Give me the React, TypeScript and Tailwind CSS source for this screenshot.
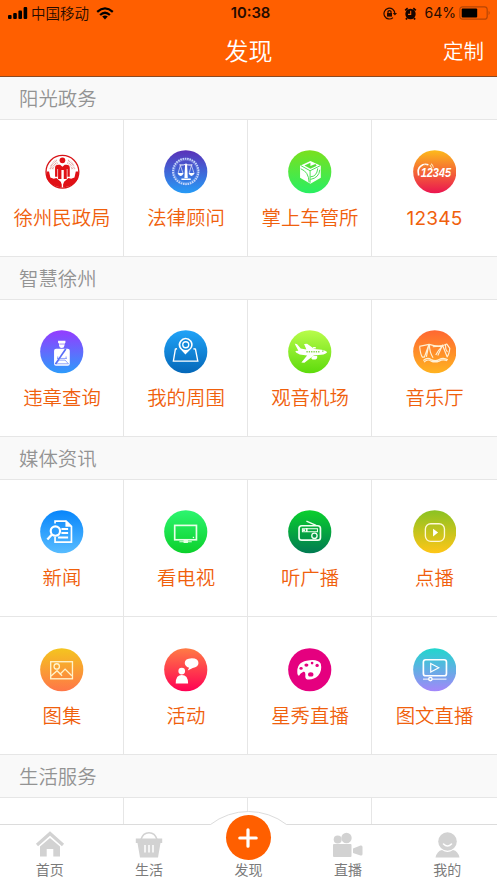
import type { ReactNode } from "react";
import { clsx } from "clsx";

interface Service {
  label: string;
  colors?: [string, string];
  glyph: ReactNode;
}

interface Section {
  title: string;
  rows: Service[][];
}

const sections: Section[] = [
  {
    title: "阳光政务",
    rows: [
      [
        {
          label: "徐州民政局",
          glyph: (
            <>
              <circle cx="67" cy="65" r="49" fill="#fff" stroke="#d81418" strokeWidth="4" />
              <g fill="#e01016">
                <circle cx="67" cy="31" r="8.5" />
                <path d="M45 53Q45 44 55 44H60L67 50L74 44H79Q89 44 89 53V80H82V57H80V87H71V60H64V87H54V57H52V80H45Z" />
                <path d="M20 64L27 64L31 82L41 86L49 84L62 95L65 103V112Q32 108 20 85Z" />
                <path d="M114 64L107 64L103 82L93 86L85 84L72 95L69 103V112Q102 108 114 85Z" />
              </g>
              <g fill="none" stroke="#d88a8a" strokeWidth="5" strokeDasharray="2 2.5">
                <path d="M31 57Q35 38 50 31M84 31Q99 38 103 57" />
                <path d="M38 57Q40 44 52 38M82 38Q94 44 96 57" />
              </g>
            </>
          ),
        },
        {
          label: "法律顾问",
          colors: ["#5a31b8", "#269bf6"],
          glyph: (
            <>
              <circle cx="65" cy="64" r="38" fill="none" stroke="#c3d4fa" strokeWidth="6" strokeDasharray="5 2" />
              <circle cx="65" cy="64" r="34" fill="none" stroke="#b7cdfa" strokeWidth="1" />
              <g fill="none" stroke="#fff" strokeWidth="3">
                <path d="M46 44Q57 47 65 42Q73 47 85 44M66 40V84" />
                <path d="M49 46L42 70M49 46L57 70M82 46L75 70M82 46L90 70" strokeWidth="1.8" />
              </g>
              <path d="M63 43H69L71 84H61ZM52 85H80V90H52ZM41 69H58Q56 78 49 78Q43 78 41 69ZM74 69H91Q88 78 82 78Q76 78 74 69Z" fill="#fff" />
            </>
          ),
        },
        {
          label: "掌上车管所",
          colors: ["#7ae01e", "#29ef63"],
          glyph: (
            <>
              <path d="M67 33L98 47V83L67 101L36 83V47Z" fill="#fff" />
              <g fill="none" stroke="#40de49" strokeWidth="2.8">
                <path d="M39 47L66 62L96 47M66 62V98" />
                <path d="M38 56Q62 65 63 96M67 80Q86 80 89 55M67 88Q93 83 95 59" />
              </g>
              <path d="M49 46L67 38V48L82 42L86 47L67 56Z" fill="#55e13a" />
            </>
          ),
        },
        {
          label: "12345",
          colors: ["#fdbb1b", "#eb1550"],
          glyph: (
            <>
              <path d="M17 76Q12 56 23 48Q32 40 46 44" fill="none" stroke="#fff" strokeWidth="5" />
              <path d="M22 55L35 43M27 54L40 43" stroke="#ef8a36" strokeWidth="1.5" />
              <path d="M51 45Q53 49 56 54M54 41Q61 46 61 53" fill="none" stroke="#ffe6b6" strokeWidth="3" />
              <text
                x="23"
                y="82"
                fill="#fff"
                fontFamily="Liberation Sans, sans-serif"
                fontSize="37"
                fontWeight="700"
                fontStyle="italic"
                textLength="91"
                lengthAdjust="spacingAndGlyphs"
              >
                12345
              </text>
              <path d="M91 75L112 70" stroke="#ef5d3c" strokeWidth="2" />
            </>
          ),
        },
      ],
    ],
  },
  {
    title: "智慧徐州",
    rows: [
      [
        {
          label: "违章查询",
          colors: ["#953bff", "#2d9bfb"],
          glyph: (
            <>
              <path d="M54 32H76V38L73 41V47Q72 54 65 54Q58 54 57 47V41L54 38Z" fill="#fff" />
              <rect x="42" y="56" width="47" height="51" rx="6" fill="#fff" />
              <path d="M58 42H72" stroke="#7d58ee" strokeWidth="2" />
              <path d="M77 57L46 102" stroke="#576cf8" strokeWidth="5" />
              <path d="M51 85H80M53 79V86M78 79V86M48 101L57 90H75L85 101Z" fill="none" stroke="#5d78f9" strokeWidth="2" />
            </>
          ),
        },
        {
          label: "我的周围",
          colors: ["#20a3f8", "#0467b8"],
          glyph: (
            <>
              <path d="M39 56L34 57L28 93H101L94 57L88 56" fill="none" stroke="#fff" strokeWidth="4" />
              <path d="M64 73L48 56Q39 43 48 32Q55 23 64 23Q75 23 82 32Q90 44 81 56Z" fill="#fff" />
              <circle cx="65" cy="44" r="16" fill="#1089db" />
              <circle cx="65" cy="44" r="9" fill="none" stroke="#fff" strokeWidth="4" />
            </>
          ),
        },
        {
          label: "观音机场",
          colors: ["#b9fc4b", "#5ddb0b"],
          glyph: (
            <>
              <path
                d="M20 41Q25 40 28 43L38 55L55 58L48 42L57 41L79 57L101 59Q113 61 117 66Q114 73 99 74L77 76L49 98L40 97L57 76L35 73L24 67L22 63L31 62Z"
                fill="#fff"
              />
              <path d="M74 78H87Q89 86 82 88H73L69 84ZM75 51H83V55H75Z" fill="#fff" />
              <path d="M55 65H94M102 63H109" stroke="#86d34c" strokeWidth="4" strokeDasharray="4 3" />
            </>
          ),
        },
        {
          label: "音乐厅",
          colors: ["#ff6732", "#ffb320"],
          glyph: (
            <g fill="none" stroke="#fff0d4" strokeWidth="3.5" strokeLinejoin="round">
              <path d="M19 49L48 43Q81 53 101 42L110 55Q108 73 102 80L88 45Q80 65 74 76" />
              <path d="M20 50Q22 73 28 81H34L47 45L40 80M49 44Q49 66 60 83M59 50Q70 49 88 48Q76 59 68 75M97 45Q96 58 103 66" />
              <path d="M31 91Q43 80 54 88Q67 95 78 88Q91 81 104 89M33 96Q44 85 54 93Q66 98 78 93Q90 86 102 92" />
            </g>
          ),
        },
      ],
    ],
  },
  {
    title: "媒体资讯",
    rows: [
      [
        {
          label: "新闻",
          colors: ["#0785fb", "#58bcff"],
          glyph: (
            <g fill="none" stroke="#fff">
              <path d="M45 40V33H78L94 49V96H45V80" strokeWidth="5" />
              <path d="M76 31V50H95Z" fill="#fff" stroke="none" />
              <path d="M64 57H84M64 69H84M54 82H84" strokeWidth="6" />
              <circle cx="46" cy="63" r="14" fill="#2b9cfc" strokeWidth="6.5" />
              <path d="M35 74L22 88" strokeWidth="7" />
            </g>
          ),
        },
        {
          label: "看电视",
          colors: ["#2df56f", "#0bd02b"],
          glyph: (
            <>
              <rect x="32" y="46" width="65" height="43" fill="none" stroke="#e7ffe7" strokeWidth="5" />
              <path d="M46 95H83M60 91H70V97H60Z" fill="#e7ffe7" stroke="#e7ffe7" strokeWidth="3" />
              <path d="M86 80H90V84H86Z" fill="#e7ffe7" />
            </>
          ),
        },
        {
          label: "听广播",
          colors: ["#0ad02d", "#017b52"],
          glyph: (
            <g fill="none" stroke="#f1fff1">
              <rect x="33" y="47" width="64" height="43" rx="8" strokeWidth="5" />
              <path d="M55 33L84 46" strokeWidth="4" />
              <rect x="43" y="56" width="45" height="9" strokeWidth="3" />
              <path d="M44 60H51M56 54V66" strokeWidth="5" />
              <circle cx="79" cy="77" r="8" fill="#079747" strokeWidth="4" />
            </g>
          ),
        },
        {
          label: "点播",
          colors: ["#8ac222", "#ffc617"],
          glyph: (
            <>
              <rect x="37" y="41" width="57" height="53" rx="16" fill="none" stroke="#fff8d5" strokeWidth="4" />
              <path d="M60 56L75 67L60 79Z" fill="#fff" />
            </>
          ),
        },
      ],
      [
        {
          label: "图集",
          colors: ["#f4c51f", "#ff7648"],
          glyph: (
            <g fill="none" stroke="#fff3cb" strokeWidth="4">
              <rect x="32" y="41" width="65" height="51" />
              <circle cx="50" cy="55" r="8" />
              <path d="M33 84L51 68L66 83M59 79L75 63L95 83" />
            </g>
          ),
        },
        {
          label: "活动",
          colors: ["#ff7c45", "#ff0054"],
          glyph: (
            <g fill="#fff">
              <circle cx="53" cy="69" r="10" />
              <path d="M35 106Q35 81 53 81Q72 81 72 106Z" />
              <path d="M83 31Q103 31 103 45Q103 57 86 60L71 67L75 59Q62 55 62 45Q62 32 83 31Z" />
            </g>
          ),
        },
        {
          label: "星秀直播",
          colors: ["#e5007f", "#e5007f"],
          glyph: (
            <>
              <path
                d="M28 76Q25 43 56 38Q88 31 98 47Q103 68 90 83Q76 96 58 94Q50 92 52 79Q52 69 46 71Q36 75 33 83Q29 83 28 76Z"
                fill="#fff"
              />
              <g fill="#e5007f">
                <ellipse cx="39" cy="61" rx="5" ry="4" />
                <ellipse cx="55" cy="51" rx="6" ry="5" />
                <circle cx="72" cy="45" r="4" />
                <circle cx="87" cy="52" r="5" />
                <ellipse cx="68" cy="79" rx="8" ry="6.5" />
              </g>
            </>
          ),
        },
        {
          label: "图文直播",
          colors: ["#20d7cd", "#a486fa"],
          glyph: (
            <g fill="none" stroke="#fff">
              <rect x="31" y="35" width="69" height="48" rx="7" strokeWidth="5" />
              <path d="M53 46L77 59L53 72Z" strokeWidth="3.5" />
              <path d="M30 93H100" strokeWidth="3" />
              <circle cx="52" cy="93" r="5" fill="#87b2eb" strokeWidth="4" />
            </g>
          ),
        },
      ],
    ],
  },
];

const tabs: { label: string; icon: ReactNode }[] = [
  {
    label: "首页",
    icon: (
      <>
        <path d="M1 14L14 2.5L27 14" fill="none" stroke="#d2d2d2" strokeWidth="3.2" />
        <path d="M4 15.6L14 7L24 15.6V25.5H17.3V18H10.7V25.5H4Z" fill="#d2d2d2" />
      </>
    ),
  },
  {
    label: "生活",
    icon: (
      <>
        <path d="M6 8.5Q8 1.7 14 1.7Q20 1.7 22 8.5" fill="none" stroke="#d2d2d2" strokeWidth="1.6" />
        <path d="M.8 7.5H27.2V12H25.5L23 26.5H5L2.5 12H.8Z" fill="#d2d2d2" />
        <path d="M10 14V21.5M14 14V21.5M18 14V21.5" stroke="#fff" strokeWidth="1.5" />
      </>
    ),
  },
  { label: "发现", icon: null },
  {
    label: "直播",
    icon: (
      <g fill="#d2d2d2">
        <circle cx="3.7" cy="8.5" r="4" />
        <circle cx="12.5" cy="7" r="5.2" />
        <rect x="-1" y="13" width="18.5" height="13" rx="1" />
        <path d="M19 17.5L26.5 14.5Q28.5 14 28.5 16V23Q28.5 25 26.5 24.5L19 22Z" />
      </g>
    ),
  },
  {
    label: "我的",
    icon: (
      <>
        <circle cx="14.5" cy="10.5" r="9.3" fill="#d2d2d2" />
        <path d="M10.5 13Q14.5 17 18.5 13" fill="none" stroke="#fff" strokeWidth="1.6" strokeLinecap="round" />
        <path d="M2.5 26.5Q4 20 9 19Q14.5 23 20 19Q25 20 26.5 26.5Z" fill="#d2d2d2" />
      </>
    ),
  },
];

function StatusBar() {
  return (
    <div className="grid h-[26px] grid-cols-3 items-center pr-[6px] pl-2 text-[#250b00]">
      <div className="flex items-center">
        <svg width="20" height="12" viewBox="0 0 20 12" fill="#000">
          <rect x="0" y="8" width="3.6" height="4" rx="1" />
          <rect x="5.2" y="6" width="3.6" height="6" rx="1" />
          <rect x="10.4" y="3.5" width="3.6" height="8.5" rx="1" />
          <rect x="15.6" y="0" width="3.6" height="12" rx="1" />
        </svg>
        <span className="ml-[3px] text-[14.5px] leading-none font-[350] whitespace-nowrap">中国移动</span>
        <svg className="ml-[7px]" width="18" height="13" viewBox="0 0 18 13" fill="none" stroke="#000" strokeWidth="2.3">
          <path d="M1.2 4.8Q9 -2 16.8 4.8M4.1 8Q9 3.6 13.9 8" />
          <path d="M9 12.4L6.2 9.6Q9 7.4 11.8 9.6Z" fill="#000" stroke="none" />
        </svg>
      </div>
      <div className="pl-[2px] text-center font-[Inter,sans-serif] text-[14.8px] leading-none font-semibold">10:38</div>
      <div className="flex items-center justify-end">
        <svg width="14" height="13" viewBox="0 0 14 13" fill="none" stroke="#250b00" strokeWidth="1.2">
          <path d="M11.8 6.5A5.4 5.4 0 1 0 10 10.6" />
          <path d="M9.8 6H14L11.9 8.6Z" fill="#250b00" stroke="none" />
          <rect x="4" y="6" width="5" height="3.6" fill="#250b00" stroke="none" />
          <path d="M5 6V4.5Q6.5 2.7 8 4.5V6" />
        </svg>
        <svg className="ml-[7px]" width="13" height="13" viewBox="0 0 13 13">
          <circle cx="6.5" cy="7" r="5.2" fill="#170500" />
          <path d="M1.2 3.4L3.7 1.2M11.8 3.4L9.3 1.2M3 11L2 12.5M10 11L11 12.5" stroke="#170500" strokeWidth="1.8" />
          <path d="M6.7 3.8V7.4H4" fill="none" stroke="#ff6200" strokeWidth="1.1" />
        </svg>
        <span className="ml-2 font-[Inter,sans-serif] text-[14px] leading-none">64%</span>
        <svg className="ml-[3px]" width="32" height="14" viewBox="0 0 32 14">
          <rect x=".8" y=".8" width="27.4" height="12.4" rx="2.8" fill="none" stroke="#b84604" strokeWidth="1.2" />
          <rect x="2.7" y="2.6" width="15.5" height="8.8" rx="1" fill="#000" />
          <path d="M29.6 4.8Q31.8 7 29.6 9.2Z" fill="#b84604" />
        </svg>
      </div>
    </div>
  );
}

function SectionTitle({ children }: { children: ReactNode }) {
  return (
    <h2 className="h-[43px] shrink-0 border-b border-[#e6e6e6] bg-[#f9f9f9] pl-[19px] text-[19.4px] leading-[42px] font-[350] text-[#939393]">
      {children}
    </h2>
  );
}

function ServiceCell({ service, id, tall }: { service: Service; id: string; tall: boolean }) {
  return (
    <div
      className={clsx(
        "flex flex-col items-center border-r border-b border-[#e6e6e6] pl-px last:border-r-0 last:pl-0",
        tall ? "h-[138px] pt-[31px]" : "h-[137px] pt-[30px]"
      )}
    >
      <svg width="43.5" height="43.5" viewBox="0 0 130 130" className="shrink-0">
        {service.colors && (
          <>
            <defs>
              <linearGradient id={id} x1="0" y1="0" x2="0" y2="1">
                <stop offset="0" stopColor={service.colors[0]} />
                <stop offset="1" stopColor={service.colors[1]} />
              </linearGradient>
            </defs>
            <circle cx="65" cy="65" r="64.5" fill={`url(#${id})`} />
          </>
        )}
        {service.glyph}
      </svg>
      <span
        className={clsx(
          "leading-[28px] whitespace-nowrap text-[#f0600c]",
          service.label === "12345"
            ? "mt-[11px] font-[Inter,sans-serif] text-[19px] tracking-[0.2px]"
            : "mt-[9px] text-[19.4px] font-[350]"
        )}
      >
        {service.label}
      </span>
    </div>
  );
}

function TabBar() {
  return (
    <nav className="relative grid h-[59px] shrink-0 grid-cols-5 border-t border-[#dcdcdc] bg-white">
      {/* raised arc behind the centre button */}
      <svg className="absolute -top-[14px] left-[210px]" width="77" height="15" viewBox="0 0 77 15">
        <path d="M.5 13.5A62 62 0 0 1 76.5 13.5V15H.5Z" fill="#fff" />
        <path d="M.5 13.5A62 62 0 0 1 76.5 13.5" fill="none" stroke="#dcdcdc" />
      </svg>
      {tabs.map((tab) => (
        <div key={tab.label} className="relative flex flex-col items-center pt-[6px]">
          {tab.icon ? (
            <svg width="28" height="28" viewBox="0 0 28 28" className="overflow-visible">
              {tab.icon}
            </svg>
          ) : (
            <>
              <div className="h-7" />
              <button className="absolute -top-[10px] flex size-[45px] items-center justify-center rounded-full bg-[#ff5f00]">
                <svg width="20" height="20" viewBox="0 0 20 20" stroke="#fff" strokeWidth="3.2" strokeLinecap="round">
                  <path d="M10 1.8V18.2M1.8 10H18.2" />
                </svg>
              </button>
            </>
          )}
          <span className="text-[14px] leading-[20px] text-[#7b7b7b]">{tab.label}</span>
        </div>
      ))}
    </nav>
  );
}

export default function App() {
  return (
    <div className="flex h-[883px] w-full flex-col overflow-hidden bg-white font-['Noto_Sans_CJK_SC',sans-serif]">
      <header className="h-[77px] shrink-0 border-b border-[#8b4a22] bg-[#ff5f00]">
        <StatusBar />
        <div className="grid h-[48px] grid-cols-3 items-center font-[350] text-white">
          <h1 className="col-start-2 text-center text-[24px] leading-none">发现</h1>
          <button className="justify-self-end pr-[13px] text-[20.5px] leading-none">定制</button>
        </div>
      </header>

      <main className="flex-1 overflow-hidden">
        {sections.map((section, s) => (
          <section key={section.title}>
            <SectionTitle>{section.title}</SectionTitle>
            {section.rows.map((row, r) => (
              <div key={r} className="grid grid-cols-[124px_124px_124px_1fr]">
                {row.map((service, i) => (
                  <ServiceCell key={service.label} service={service} id={`fill-${s}-${r}-${i}`} tall={r > 0} />
                ))}
              </div>
            ))}
          </section>
        ))}
        <SectionTitle>生活服务</SectionTitle>
        <div className="grid h-[137px] grid-cols-[124px_124px_124px_1fr] divide-x divide-[#e6e6e6]">
          <div />
          <div />
          <div />
          <div />
        </div>
      </main>

      <TabBar />
    </div>
  );
}
